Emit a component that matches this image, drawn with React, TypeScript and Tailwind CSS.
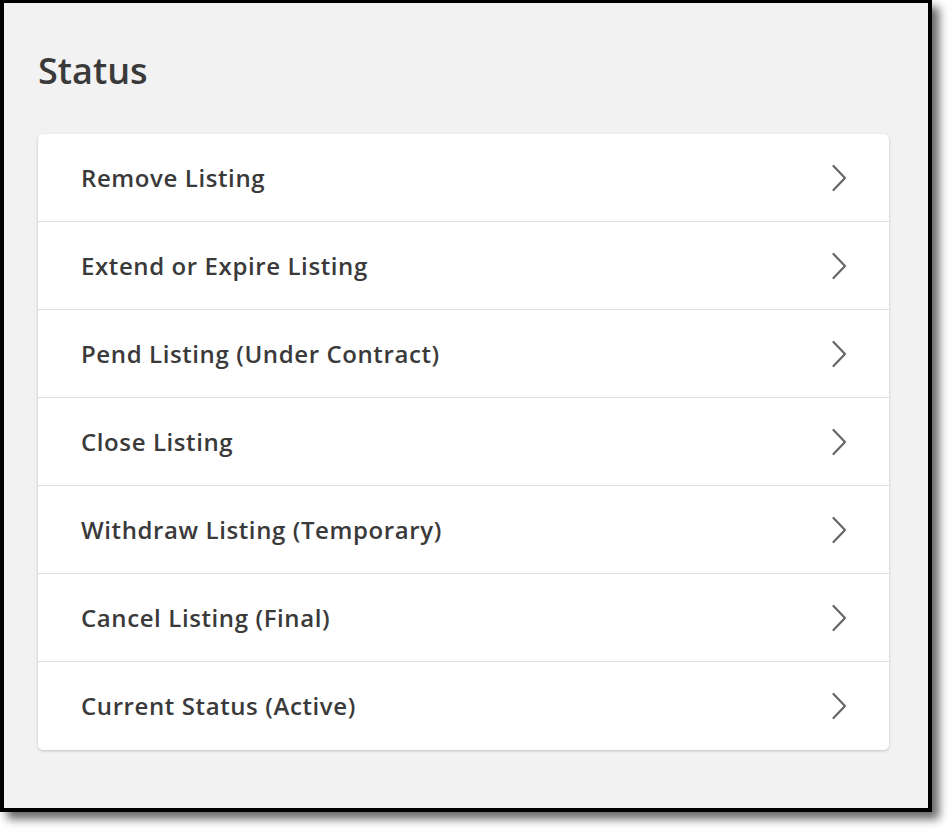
import React from "react";

const items = [
  "Remove Listing",
  "Extend or Expire Listing",
  "Pend Listing (Under Contract)",
  "Close Listing",
  "Withdraw Listing (Temporary)",
  "Cancel Listing (Final)",
  "Current Status (Active)",
];

function Chevron() {
  return (
    <svg width="16" height="28" viewBox="0 0 16 28" fill="none" className="shrink-0">
      <path d="M2.5 2 L14 14 L2.5 26" stroke="#666666" strokeWidth="2.2" strokeLinecap="round" strokeLinejoin="round" />
    </svg>
  );
}

export default function App() {
  return (
    <div className="w-[952px] h-[832px] bg-white" style={{ fontFamily: '"Open Sans", sans-serif' }}>
      <div className="w-[932px] h-[812px] border-4 border-t-[3px] border-black bg-[#f2f2f2] shadow-[7px_7px_9px_rgba(0,0,0,0.6)] pl-[34px] pr-[39px] pt-[47px]">
        <h1 className="text-[36px] leading-[42px] font-semibold text-[#3a3a3a]">Status</h1>
        <div className="mt-[42px] bg-white rounded-[5px] shadow-[0_1px_3px_rgba(0,0,0,0.2)] overflow-hidden">
          {items.map((t, i) => (
            <div
              key={t}
              className={`flex items-center justify-between h-[88px] pl-[43px] pr-[42px] ${i < items.length - 1 ? "border-b border-[#dddddd]" : ""}`}
            >
              <span className="text-[24px] font-semibold text-[#3a3a3a] tracking-[0.6px]">{t}</span>
              <Chevron />
            </div>
          ))}
        </div>
      </div>
    </div>
  );
}
